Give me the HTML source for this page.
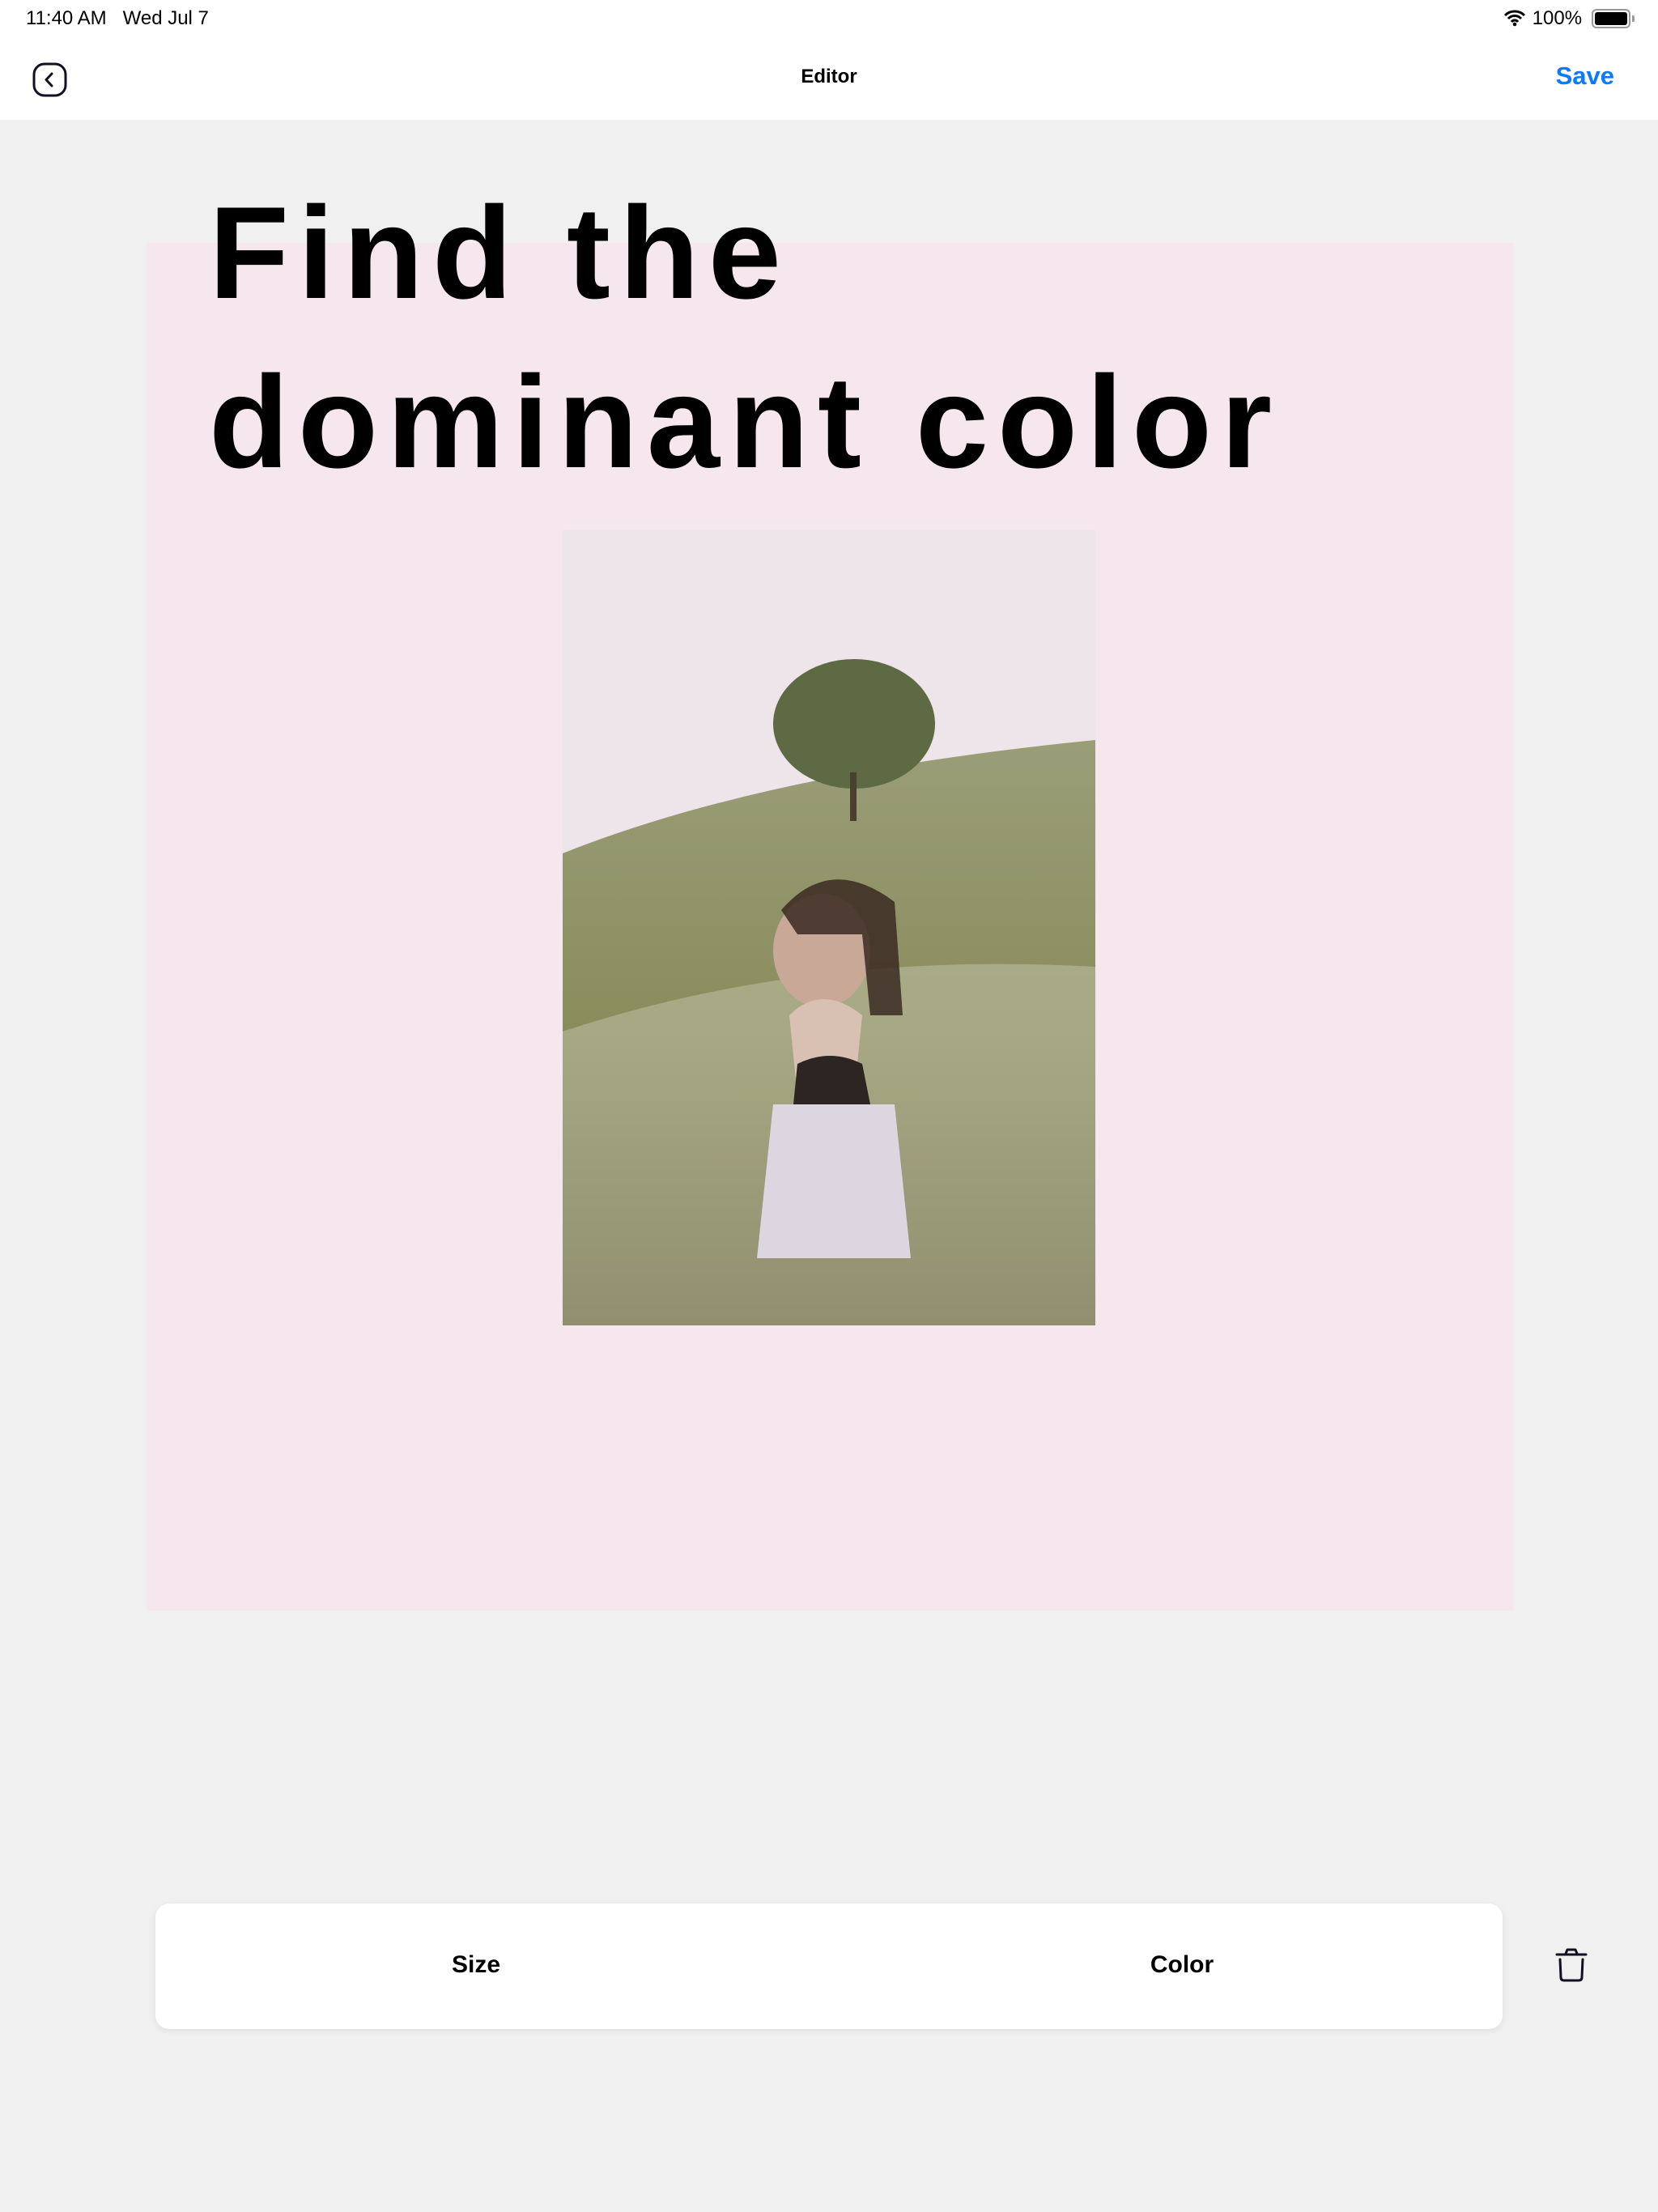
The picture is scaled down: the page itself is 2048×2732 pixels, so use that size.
<!DOCTYPE html>
<html><head><meta charset="utf-8"><style>
*{margin:0;padding:0;box-sizing:border-box}
body{width:2048px;height:2732px;background:#f0f0f0;font-family:"Liberation Sans",sans-serif;position:relative;overflow:hidden}
.top{position:absolute;left:0;top:0;width:2048px;height:148px;background:#fff}
.st{position:absolute;top:9px;font-size:24px;color:#000}
.title{position:absolute;left:258px;font-size:162px;font-weight:bold;color:#000;letter-spacing:11px;line-height:1;white-space:nowrap}
</style></head><body>
<div class="top">
<div class="st" style="left:32px">11:40 AM&nbsp;&nbsp;&nbsp;Wed Jul 7</div>
<div class="st" style="left:1856px;width:160px">
<svg width="30" height="22" viewBox="0 0 30 22" style="vertical-align:-3px"><path d="M3 8a17 17 0 0 1 24 0M7 12a11 11 0 0 1 16 0M11 16a5 5 0 0 1 8 0" stroke="#000" stroke-width="3" fill="none"/><circle cx="15" cy="19" r="2.3"/></svg> 100%</div>
<div style="position:absolute;left:1966px;top:11px;width:48px;height:24px;border:2px solid #999;border-radius:6px;padding:2px"><div style="width:100%;height:100%;background:#000;border-radius:3px"></div></div>
<div style="position:absolute;left:2016px;top:19px;width:3px;height:8px;background:#999;border-radius:0 2px 2px 0"></div>
<svg style="position:absolute;left:40px;top:77px" width="43" height="43" viewBox="0 0 43 43"><rect x="2" y="2" width="39" height="39" rx="13" fill="none" stroke="#111122" stroke-width="3"/><path d="M24 14l-7 7.5 7 7.5" fill="none" stroke="#111122" stroke-width="3" stroke-linecap="round" stroke-linejoin="round"/></svg>
<div style="position:absolute;left:0;width:2048px;top:81px;text-align:center;font-size:24px;font-weight:bold">Editor</div>
<div style="position:absolute;right:54px;top:76px;font-size:31px;font-weight:bold;color:#0a7aff">Save</div>
</div>
<div style="position:absolute;left:181px;top:300px;width:1688px;height:1689px;background:#f6e7ee"></div>
<div class="title" style="top:232px">Find the</div>
<div class="title" style="top:441px">dominant color</div>
<svg style="position:absolute;left:695px;top:654px" width="658" height="983" viewBox="0 0 658 983">
<defs><linearGradient id="f" x1="0" y1="0" x2="0" y2="1"><stop offset="0" stop-color="#9a9e78"/><stop offset=".5" stop-color="#8a8c5c"/><stop offset="1" stop-color="#5e5834"/></linearGradient></defs>
<rect width="658" height="983" fill="#eee5ea"/>
<path d="M0 400 Q250 300 658 260 L658 983 L0 983Z" fill="url(#f)"/>
<ellipse cx="360" cy="240" rx="100" ry="80" fill="#5d6a44"/>
<rect x="355" y="300" width="8" height="60" fill="#4a4030"/>
<path d="M0 620 Q300 520 658 540 L658 983 L0 983Z" fill="#c4c6ac" opacity=".5"/>
<ellipse cx="320" cy="520" rx="60" ry="70" fill="#c9a897"/>
<path d="M280 600 Q320 560 370 600 L360 700 L290 700Z" fill="#d8c0b2"/>
<path d="M290 660 Q330 640 370 660 L380 710 L285 710Z" fill="#2d2522"/>
<path d="M260 710 L410 710 L430 900 L240 900Z" fill="#dcd6e0"/>
<path d="M270 470 Q330 400 410 460 L420 600 L380 600 L370 500 L290 500Z" fill="#3a2a22" opacity=".85"/>
</svg>
<div style="position:absolute;left:192px;top:2351px;width:1664px;height:155px;background:#fff;border-radius:17px;box-shadow:0 2px 8px rgba(0,0,0,.08)"></div>
<div style="position:absolute;left:192px;width:792px;top:2410px;text-align:center;font-size:30px;font-weight:bold">Size</div>
<div style="position:absolute;left:1064px;width:792px;top:2410px;text-align:center;font-size:30px;font-weight:bold">Color</div>
<svg style="position:absolute;left:1921px;top:2406px" width="40" height="42" viewBox="0 0 40 42"><path d="M2 8H38M13 7l2-5h10l2 5M6 14l1 22q0 4 4 4h18q4 0 4-4l1-22" fill="none" stroke="#111122" stroke-width="3" stroke-linecap="round" stroke-linejoin="round"/></svg>
</body></html>
